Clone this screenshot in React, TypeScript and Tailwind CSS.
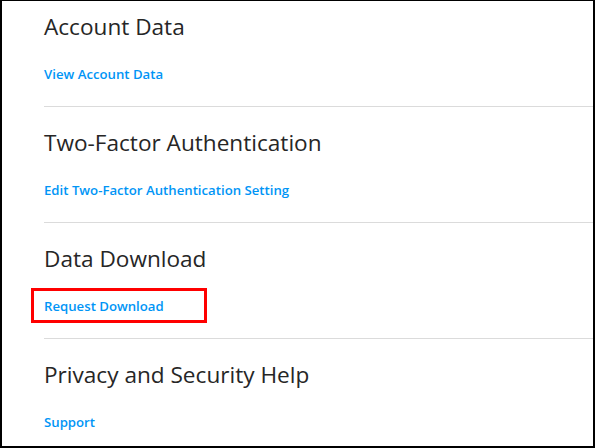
const SECTIONS = [
  { title: "Account Data", link: "View Account Data" },
  { title: "Two-Factor Authentication", link: "Edit Two-Factor Authentication Setting" },
  { title: "Data Download", link: "Request Download", highlight: true },
  { title: "Privacy and Security Help", link: "Support" },
];

export default function App() {
  return (
    <div
      className="h-[448px] w-[595px] overflow-hidden border-t border-r-2 border-b-2 border-l-2 border-black bg-white"
      style={{ fontFamily: '"Open Sans", "Noto Sans", sans-serif' }}
    >
      <div className="ml-[42px] mt-[-10px]">
        {SECTIONS.map((s) => (
          <section
            key={s.title}
            className="flex h-[116px] flex-col border-b border-[#dbdbdb] last:border-b-0"
          >
            <h2 className="mt-[22px] text-[22.6px] leading-[28px] font-normal text-[#262626]">
              {s.title}
            </h2>
            <div className="mt-[24px] flex">
              <a className="relative text-[13.2px] leading-[18px] font-semibold text-[#0095f6]">
                {s.link}
                {s.highlight && (
                  <span className="absolute top-[-9px] bottom-[-8px] left-[-13px] right-[-43px] border-[3px] border-[#ff0000]" />
                )}
              </a>
            </div>
          </section>
        ))}
      </div>
    </div>
  );
}
